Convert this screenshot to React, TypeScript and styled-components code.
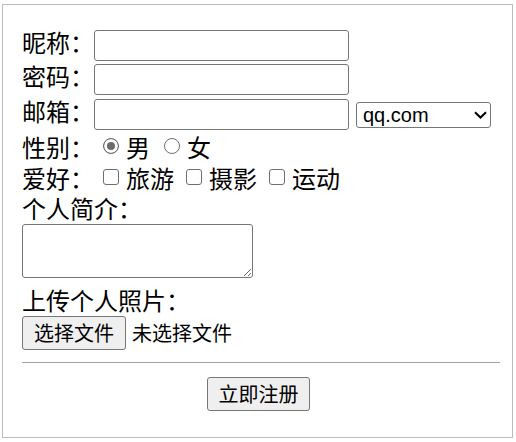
import React from 'react'
import styled, { createGlobalStyle } from 'styled-components'

const GlobalStyle = createGlobalStyle`
  body {
    margin: 0;
    background: #fff;
    color: #000;
    font-family: "Noto Sans CJK SC", "Noto Sans", sans-serif;
  }
`

const Form = styled.form`
  display: flex;
  flex-direction: column;
  width: 478px;
  margin: 4px 0 0 2px;
  padding: 25px 12px 26px 19px;
  border: 1px solid #bcbcbc;
`

const Row = styled.div<{ $h?: number; $mt?: number }>`
  display: flex;
  align-items: center;
  height: ${p => p.$h ?? 31}px;
  margin-top: ${p => p.$mt ?? 0}px;
`

const Label = styled.span<{ $lift?: number }>`
  flex-shrink: 0;
  font-size: 24px;
  line-height: 24px;
  white-space: nowrap;
  padding-bottom: ${p => p.$lift ?? 7}px;
`

const TextInput = styled.input`
  box-sizing: border-box;
  appearance: none;
  width: 255px;
  height: 31px;
  margin: 0;
  padding: 0 3px;
  border: 1px solid #767676;
  border-radius: 3px;
  background: #fff;
  font: 20px "Liberation Sans", sans-serif;
  outline: none;
`

const SelectWrap = styled.div`
  position: relative;
  margin-left: 7px;
  height: 26px;
`

const MailSelect = styled.select`
  box-sizing: border-box;
  appearance: none;
  width: 135px;
  height: 26px;
  margin: 0;
  padding: 0 0 0 6px;
  border: 1px solid #767676;
  border-radius: 3px;
  background: #fff;
  color: #000;
  font: 20px "Liberation Sans", sans-serif;
  outline: none;
`

const Chevron = styled.svg`
  position: absolute;
  right: 4px;
  top: 9px;
  pointer-events: none;
`

const ChoiceGroup = styled.div<{ $gap: number }>`
  display: flex;
  align-items: center;
  gap: ${p => p.$gap}px;
  margin-left: 9px;
`

const Choice = styled.label`
  display: flex;
  align-items: center;
  gap: 7px;
  font-size: 24px;
  line-height: 24px;
  white-space: nowrap;
`

const Mark = styled.span<{ $round?: boolean; $on?: boolean }>`
  flex: none;
  box-sizing: border-box;
  display: block;
  width: 16px;
  height: 16px;
  margin-bottom: 2px;
  border: 1px solid ${p => (p.$on ? '#6b6b6b' : '#6f6f6f')};
  border-radius: ${p => (p.$round ? '50%' : '3px')};
  background: ${p => (p.$on ? '#6b6b6b' : '#fff')};
  box-shadow: ${p => (p.$on ? 'inset 0 0 0 3px #fff' : 'none')};
`

const Intro = styled.textarea`
  box-sizing: border-box;
  display: block;
  width: 231px;
  height: 54px;
  margin: 0;
  border: 1px solid #767676;
  border-radius: 3px;
  outline: none;
  resize: both;
`

const PlainButton = styled.button<{ $w: number }>`
  box-sizing: border-box;
  width: ${p => p.$w}px;
  height: 34px;
  margin: 0;
  padding: 0;
  border: 1px solid #767676;
  border-radius: 3px;
  background: #efefef;
  color: #000;
  font-family: "Noto Sans CJK SC", sans-serif;
  font-size: 20px;
  line-height: 20px;
`

const FileHint = styled.span`
  margin-left: 6px;
  font-size: 20px;
  line-height: 20px;
`

const Divider = styled.hr`
  height: 0;
  margin: 12px 0 0;
  border: 0;
  border-top: 1px solid #a0a0a0;
`

const SubmitRow = styled.div`
  display: flex;
  justify-content: center;
  margin-top: 14px;
  padding-right: 5px;
`

export default function App() {
  return (
    <>
      <GlobalStyle />
      <Form onSubmit={e => e.preventDefault()}>
        <Row>
          <Label>昵称：</Label>
          <TextInput type="text" />
        </Row>
        <Row $mt={3}>
          <Label>密码：</Label>
          <TextInput type="password" />
        </Row>
        <Row $mt={4}>
          <Label>邮箱：</Label>
          <TextInput type="text" />
          <SelectWrap>
            <MailSelect defaultValue="qq.com">
              <option>qq.com</option>
              <option>163.com</option>
              <option>sina.com</option>
            </MailSelect>
            <Chevron width="13" height="8" viewBox="0 0 13 8">
              <path d="M1 1.2 L6.5 6.5 L12 1.2" fill="none" stroke="#000" strokeWidth="2" />
            </Chevron>
          </SelectWrap>
        </Row>
        <Row $mt={1}>
          <Label $lift={0}>性别：</Label>
          <ChoiceGroup role="radiogroup" $gap={14}>
            <Choice><Mark role="radio" aria-checked $round $on />男</Choice>
            <Choice><Mark role="radio" aria-checked={false} $round />女</Choice>
          </ChoiceGroup>
        </Row>
        <Row>
          <Label $lift={0}>爱好：</Label>
          <ChoiceGroup $gap={12}>
            <Choice><Mark role="checkbox" aria-checked={false} />旅游</Choice>
            <Choice><Mark role="checkbox" aria-checked={false} />摄影</Choice>
            <Choice><Mark role="checkbox" aria-checked={false} />运动</Choice>
          </ChoiceGroup>
        </Row>
        <Row>
          <Label $lift={2}>个人简介：</Label>
        </Row>
        <Intro />
        <Row $mt={7}>
          <Label $lift={2}>上传个人照片：</Label>
        </Row>
        <Row $h={34}>
          <PlainButton type="button" $w={104}>选择文件</PlainButton>
          <FileHint>未选择文件</FileHint>
        </Row>
        <Divider />
        <SubmitRow>
          <PlainButton type="submit" $w={103}>立即注册</PlainButton>
        </SubmitRow>
      </Form>
    </>
  )
}
